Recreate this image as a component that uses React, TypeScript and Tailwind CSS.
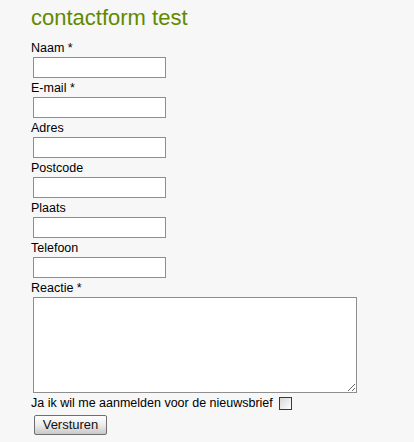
import React from 'react';

const fields = ['Naam *', 'E-mail *', 'Adres', 'Postcode', 'Plaats', 'Telefoon'];

export default function App() {
  return (
    <div className="min-h-[442px] w-full bg-[#f7f7f7] pl-[31px] pt-[5px] font-['Liberation_Sans',Arial,sans-serif] text-[12.5px] text-black">
      <h1 className="h-[33px] text-[22px] leading-[26px] text-[#5f8a00]">contactform test</h1>
      <form className="flex flex-col">
        {fields.map((label) => (
          <div key={label} className="flex flex-col">
            <label className="h-[19px] pt-[1px] leading-[19px]">{label}</label>
            <input
              type="text"
              className="ml-[2px] h-[21px] w-[133px] border border-[#8e8e8e] bg-white px-1 outline-none"
            />
          </div>
        ))}
        <label className="h-[19px] pt-[1px] leading-[19px]">Reactie *</label>
        <textarea className="ml-[2px] h-[96px] w-[324px] border border-[#8e8e8e] bg-white p-1 outline-none" />
        <div className="flex h-[20px] items-center">
          <span>Ja ik wil me aanmelden voor de nieuwsbrief</span>
          <input
            type="checkbox"
            className="ml-[6px] h-[13px] w-[13px] appearance-none border border-[#3a3a3a] bg-gradient-to-br from-[#d8d8d8] to-white"
          />
        </div>
        <div className="pt-[2px]">
          <button
            type="button"
            className="ml-[3px] h-[20px] w-[73px] rounded-[2px] border border-[#6f6f6f] bg-gradient-to-b from-white via-[#ececec] to-[#c8c8c8] text-[13px] leading-[18px] text-[#111]"
          >
            Versturen
          </button>
        </div>
      </form>
    </div>
  );
}
